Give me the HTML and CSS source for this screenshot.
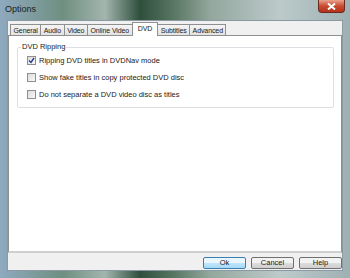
FILE: index.html
```html
<!DOCTYPE html>
<html lang="en">
<head>
    <meta charset="UTF-8">
    <title>Options</title>
    <link rel="stylesheet" href="styles.css">
</head>
<body>
    <div class="window">
        <!-- 타이틀바 -->
        <div class="titlebar">
            <span class="title">Options</span>
            <span class="close">
                <svg width="9" height="7" viewBox="0 0 9 7">
                    <path d="M1 0.5 L8 6.5 M8 0.5 L1 6.5" stroke="#fff" stroke-width="2"/>
                </svg>
            </span>
        </div>

        <div class="client">
            <!-- 탭 -->
            <div class="tabs">
                <span class="tab">General</span>
                <span class="tab">Audio</span>
                <span class="tab">Video</span>
                <span class="tab">Online Video</span>
                <span class="tab active">DVD</span>
                <span class="tab">Subtitles</span>
                <span class="tab">Advanced</span>
            </div>

            <!-- 탭 페이지 -->
            <div class="page">
                <div class="group">
                    <span class="legend">DVD Ripping</span>
                    <label class="check">
                        <span class="box">
                            <svg width="7" height="7" viewBox="0 0 7 7">
                                <path d="M1 3.5 L3 5.5 L6 1" fill="none" stroke="#2a3d8f" stroke-width="1.4"/>
                            </svg>
                        </span>
                        Ripping DVD titles in DVDNav mode
                    </label>
                    <label class="check">
                        <span class="box"></span>
                        Show fake titles in copy protected DVD disc
                    </label>
                    <label class="check">
                        <span class="box"></span>
                        Do not separate a DVD video disc as titles
                    </label>
                </div>
            </div>

            <!-- 하단 버튼 -->
            <div class="buttons">
                <span class="btn default">Ok</span>
                <span class="btn">Cancel</span>
                <span class="btn">Help</span>
            </div>
        </div>
    </div>
</body>
</html>
```

FILE: styles.css
```css
body {
    margin: 0;
    font-family: "Liberation Sans", Arial, sans-serif;
    font-size: 7.5px;
    color: #1a1a1a;
}

/* 창 전체 : 에어로 유리 프레임 */
.window {
    width: 350px;
    height: 278px;
    display: flex;
    flex-direction: column;
    background: linear-gradient(to right, #8fa9bf 0%, #6f8f80 18%, #a3b5ae 30%, #2f4f3c 40%, #5a7864 50%, #93a79d 60%, #bccaca 80%, #9fb0b3 100%);
}

.titlebar {
    height: 20px;
    display: flex;
    align-items: flex-start;
    justify-content: space-between;
    padding: 0 5px;
}
.title {
    font-size: 9px;
    color: #16221c;
    margin-top: 4px;
}
.close {
    width: 27px;
    height: 13px;
    display: flex;
    align-items: center;
    justify-content: center;
    background: linear-gradient(to bottom, #e9a38f, #c94a31 50%, #b5321c);
    border: 1px solid #6d2a20;
    border-top: 0;
    border-radius: 0 0 4px 4px;
    box-sizing: border-box;
}

/* 클라이언트 영역 */
.client {
    flex: 1;
    margin: 0 7px 7px;
    background-color: #f0f0f0;
    border: 1px solid #8a9aa4;
    display: flex;
    flex-direction: column;
    padding: 1px 0 0 0;
}

.tabs {
    display: flex;
    align-items: flex-end;
    padding-left: 2px;
    height: 13px;
    position: relative;
    z-index: 1;
}
.tab {
    height: 11px;
    line-height: 11px;
    padding: 0 2.5px;
    border: 1px solid #8e8f8f;
    border-bottom: 0;
    border-right: 0;
    background: linear-gradient(to bottom, #f4f4f4, #e2e2e2);
    font-size: 7px;
    letter-spacing: -0.1px;
    box-sizing: border-box;
}
.tab:last-child {
    border-right: 1px solid #8e8f8f;
}
.tab.active {
    height: 14px;
    margin-bottom: -1px;
    padding: 0 5px;
    background: #fff;
    border-right: 1px solid #8e8f8f;
    line-height: 12px;
}
.tab.active + .tab {
    border-left: 0;
}

/* 탭 페이지 */
.page {
    height: 218px;
    background-color: #fff;
    border: 1px solid #8e8f8f;
    border-bottom: 2px solid #cfcfcf;
    box-sizing: border-box;
    padding: 11px 7px 0 8px;
}

.group {
    position: relative;
    height: 61px;
    border: 1px solid #dcdfe3;
    border-radius: 2px;
    padding: 4px 0 0 9px;
    box-sizing: border-box;
}
.legend {
    position: absolute;
    top: -6px;
    left: 3px;
    padding: 0 1px;
    background: #fff;
}

.check {
    display: flex;
    align-items: center;
    gap: 3px;
    height: 17px;
}
.box {
    width: 9px;
    height: 9px;
    box-sizing: border-box;
    border: 1px solid #8f8f8f;
    background: linear-gradient(135deg, #dcdcdc, #f8f8f8);
    display: flex;
    align-items: center;
    justify-content: center;
}

/* 버튼 */
.buttons {
    display: flex;
    justify-content: flex-end;
    gap: 5px;
    padding: 4px 0 0 0;
}
.btn {
    width: 43px;
    height: 12px;
    box-sizing: border-box;
    border: 1px solid #707070;
    border-radius: 2px;
    background: linear-gradient(to bottom, #f2f2f2 50%, #dddddd 50%, #cfcfcf);
    text-align: center;
    line-height: 10px;
    font-size: 7.5px;
}
.btn.default {
    border-color: #3c7fb1;
    background: linear-gradient(to bottom, #eaf6fd 50%, #bee6fd 50%, #a7d9f5);
}
```
